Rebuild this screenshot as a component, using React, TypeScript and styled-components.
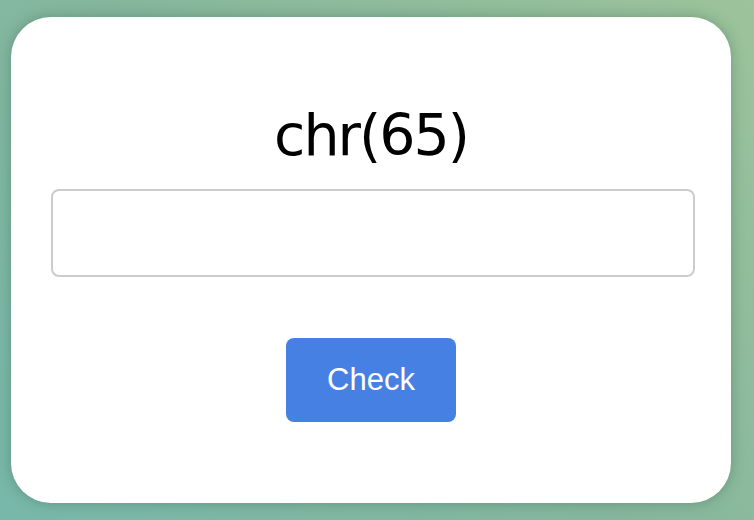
import styled, { createGlobalStyle } from "styled-components";

const GlobalStyle = createGlobalStyle`
  html, body {
    margin: 0;
    padding: 0;
    height: 100%;
  }
  body {
    background: linear-gradient(225deg, #9cc39b 0%, #86b79d 50%, #78b8aa 100%);
    font-family: "Liberation Sans", Arial, sans-serif;
    overflow: hidden;
  }
`

const Page = styled.main`
  width: 754px;
  height: 520px;
  padding: 17px 0 0 11px;
  box-sizing: border-box;
`

const Card = styled.section`
  width: 720px;
  height: 486px;
  box-sizing: border-box;
  background: #fff;
  border-radius: 40px;
  box-shadow: 0 0 14px rgba(40, 80, 60, 0.35);
  padding: 84px 40px 0 40px;
  display: flex;
  flex-direction: column;
  align-items: center;
`

const Title = styled.h1`
  margin: 0 0 20px;
  font-family: "DejaVu Sans", Verdana, sans-serif;
  font-weight: 400;
  font-size: 57px;
  line-height: 68px;
  color: #000;
  letter-spacing: -2px;
`

const Answer = styled.input`
  align-self: flex-start;
  width: 644px;
  height: 88px;
  box-sizing: border-box;
  border: 2px solid #cccccc;
  border-radius: 8px;
  outline: none;
  font-size: 28px;
  padding: 0 16px;
`

const CheckButton = styled.button`
  margin-top: 61px;
  width: 170px;
  height: 84px;
  border: none;
  border-radius: 8px;
  background: #4780e3;
  color: #fff;
  font-family: "Liberation Sans", Arial, sans-serif;
  font-size: 31px;
  cursor: pointer;
`

export default function App() {
  return (
    <>
      <GlobalStyle />
      <Page>
        <Card>
          <Title>chr(65)</Title>
          <Answer type="text" />
          <CheckButton>Check</CheckButton>
        </Card>
      </Page>
    </>
  );
}
